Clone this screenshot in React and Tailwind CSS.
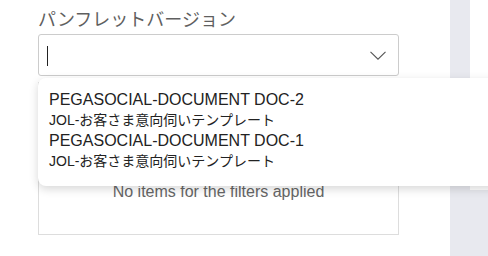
import React from 'react';

const font = { fontFamily: '"Liberation Sans", "Noto Sans CJK JP", sans-serif' };

const options = [
  { title: 'PEGASOCIAL-DOCUMENT DOC-2', sub: 'JOL-お客さま意向伺いテンプレート' },
  { title: 'PEGASOCIAL-DOCUMENT DOC-1', sub: 'JOL-お客さま意向伺いテンプレート' },
];

const Chevron = () => (
  <svg className="w-[16px] h-[9px]" viewBox="0 0 16 9" fill="none" stroke="#555" strokeWidth="1.1">
    <path d="M0.5 0.8l7.5 7.4 7.5-7.4" />
  </svg>
);

export default function App() {
  return (
    <div className="relative w-[488px] h-[256px] overflow-hidden bg-white flex" style={font}>
      <div className="w-[450px] pl-[38px] pr-[51px] pt-[9px]">
        <div className="text-[18px] leading-[22px] text-[#5f5f5f]">パンフレットバージョン</div>
        <div className="mt-[3px] h-[42px] border border-[#ccc] rounded-[3px] flex items-center justify-between pl-[8px] pr-[12px]">
          <div className="w-px h-[20px] mt-[2px] bg-[#222]" />
          <Chevron />
        </div>
        <div className="mt-[6px] h-[153px] border border-[#ddd] flex justify-center pt-[99px]">
          <span className="text-[16px] leading-[20px] text-[#666]">No items for the filters applied</span>
        </div>
      </div>
      <div className="w-[20px] h-full bg-[#e8e9ef]" />
      <div className="flex-1 flex flex-col">
        <div className="h-[190px] bg-white rounded-bl-[8px]" />
        <div className="flex-1 bg-[#e8e9ef]" />
      </div>

      <div className="absolute left-[38px] top-[78px] w-[480px] h-[108px] bg-white rounded-[8px] shadow-[0_3px_10px_rgba(0,0,0,0.16)] pt-[11px] pl-[11px]">
        {options.map((o) => (
          <div key={o.title} className="text-[#222]">
            <div className="text-[16px] leading-[21px]">{o.title}</div>
            <div className="text-[14px] leading-[20px]">{o.sub}</div>
          </div>
        ))}
      </div>
    </div>
  );
}
